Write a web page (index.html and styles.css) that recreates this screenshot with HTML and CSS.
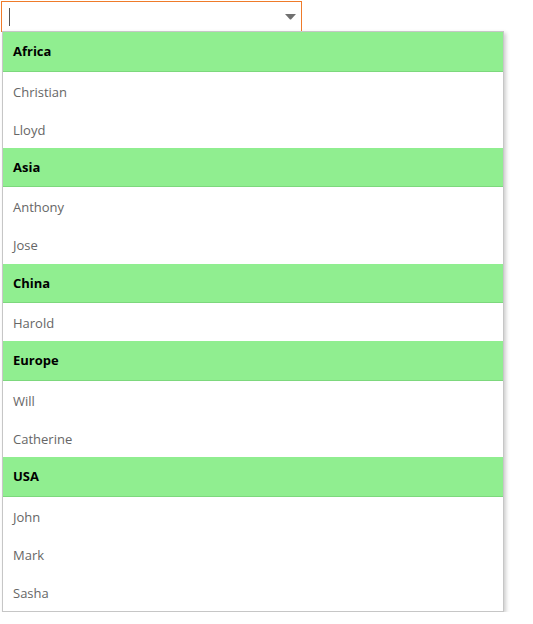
FILE: index.html
```html
<!DOCTYPE html>
<html>
<head>
<meta charset="utf-8">
<title>Grouped combo</title>
<link rel="stylesheet" href="styles.css">
</head>
<body>
<div class="combo">
  <div class="input">
    <span class="caret"></span>
    <svg class="arrow" width="11" height="6" viewBox="0 0 11 6"><path d="M0 0H11L6 5.5H5Z" fill="#707070"></path></svg>
  </div>
  <ul class="popup">
    <li class="group">Africa</li>
    <li class="item">Christian</li>
    <li class="item">Lloyd</li>
    <li class="group">Asia</li>
    <li class="item">Anthony</li>
    <li class="item">Jose</li>
    <li class="group">China</li>
    <li class="item">Harold</li>
    <li class="group">Europe</li>
    <li class="item">Will</li>
    <li class="item">Catherine</li>
    <li class="group">USA</li>
    <li class="item">John</li>
    <li class="item">Mark</li>
    <li class="item">Sasha</li>
  </ul>
</div>
</body>
</html>
```

FILE: styles.css
```css
html, body {
  margin: 0;
  padding: 0;
  background: #ffffff;
  font-family: "Open Sans", "Noto Sans", sans-serif;
}
.combo {
  padding: 1px 0 0 1px;
}
.input {
  box-sizing: border-box;
  width: 301px;
  height: 31px;
  border: 1px solid #ef7b2a;
  display: flex;
  align-items: center;
  justify-content: space-between;
  padding: 0 5px 0 7px;
}
.caret {
  width: 1px;
  height: 18px;
  background: #555555;
}
.arrow {
  display: block;
  margin-top: 1px;
}
.popup {
  list-style: none;
  margin: -1px 0 0 1px;
  padding: 0;
  width: 502px;
  box-sizing: border-box;
  border: 1px solid #c6c6c6;
  background: #ffffff;
  box-shadow: 2px 2px 4px rgba(0, 0, 0, 0.2);
}
.group {
  height: 38.6px;
  line-height: 39px;
  background: #90ee90;
  border-bottom: 1px solid #7dd87d;
  color: #000000;
  font-weight: bold;
  font-size: 13px;
  padding-left: 10px;
}
.item {
  height: 38.1px;
  line-height: 40px;
  color: #666666;
  font-size: 13px;
  padding-left: 10px;
}
```
